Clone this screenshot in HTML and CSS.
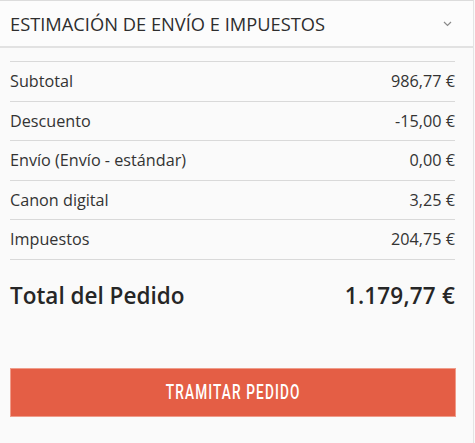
FILE: index.html
```html
<!DOCTYPE html>
<html lang="es">
<head>
<meta charset="utf-8">
<link rel="stylesheet" href="styles.css">
</head>
<body>
<div class="panel">
  <div class="header">
    <span class="title">ESTIMACIÓN DE ENVÍO E IMPUESTOS</span>
    <svg class="chev" width="9" height="6" viewBox="0 0 9 6"><path d="M1 1 L4.5 4.5 L8 1" fill="none" stroke="#8a8a8a" stroke-width="1.2"/></svg>
  </div>
  <div class="content">
    <div class="rows">
      <div class="row"><span>Subtotal</span><span>986,77 €</span></div>
      <div class="row"><span>Descuento</span><span>-15,00 €</span></div>
      <div class="row"><span>Envío (Envío - estándar)</span><span>0,00 €</span></div>
      <div class="row"><span>Canon digital</span><span>3,25 €</span></div>
      <div class="row"><span>Impuestos</span><span>204,75 €</span></div>
    </div>
    <div class="total"><span>Total del Pedido</span><span class="amount">1.179,77 €</span></div>
    <button class="cta"><span class="cta-label">TRAMITAR PEDIDO</span></button>
  </div>
</div>
</body>
</html>
```
FILE: styles.css
```css
html, body {
  margin: 0;
  padding: 0;
  background: #fafafa;
}
body {
  font-family: "Open Sans", "Liberation Sans", sans-serif;
  color: #333;
}
.panel {
  width: 473px;
  height: 442px;
  border-top: 1px solid #dcdcdc;
  border-right: 1px solid #e4e4e4;
  background: #fafafa;
}
.header {
  height: 45px;
  border-bottom: 2px solid #e2e2e2;
  padding: 0 21px 0 10px;
  display: flex;
  align-items: center;
  justify-content: space-between;
  background: #fcfcfc;
}
.title {
  font-size: 18.3px;
  color: #2e2e2e;
}
.chev {
  margin-top: 1px;
}
.content {
  padding: 13px 18px 0 10px;
}
.rows {
  border-top: 1px solid #d9d9d9;
}
.row {
  height: 38.5px;
  border-bottom: 1px solid #d9d9d9;
  display: flex;
  align-items: center;
  justify-content: space-between;
  font-size: 16.2px;
  color: #333;
}
.total {
  display: flex;
  justify-content: space-between;
  align-items: center;
  height: 31px;
  margin-top: 20px;
  font-size: 22.5px;
  font-weight: 600;
  color: #262626;
}
.amount {
  letter-spacing: 0.2px;
}
.cta {
  display: flex;
  align-items: center;
  justify-content: center;
  width: 446px;
  height: 49px;
  margin-top: 57px;
  border: 1px solid #ef9c8a;
  background: #e45e45;
  color: #fff;
  padding: 0;
  cursor: pointer;
}
.cta-label {
  display: inline-block;
  font-family: "Roboto", sans-serif;
  font-size: 19.5px;
  font-weight: 500;
  letter-spacing: 1.6px;
  transform: scaleX(0.7);
}
```
